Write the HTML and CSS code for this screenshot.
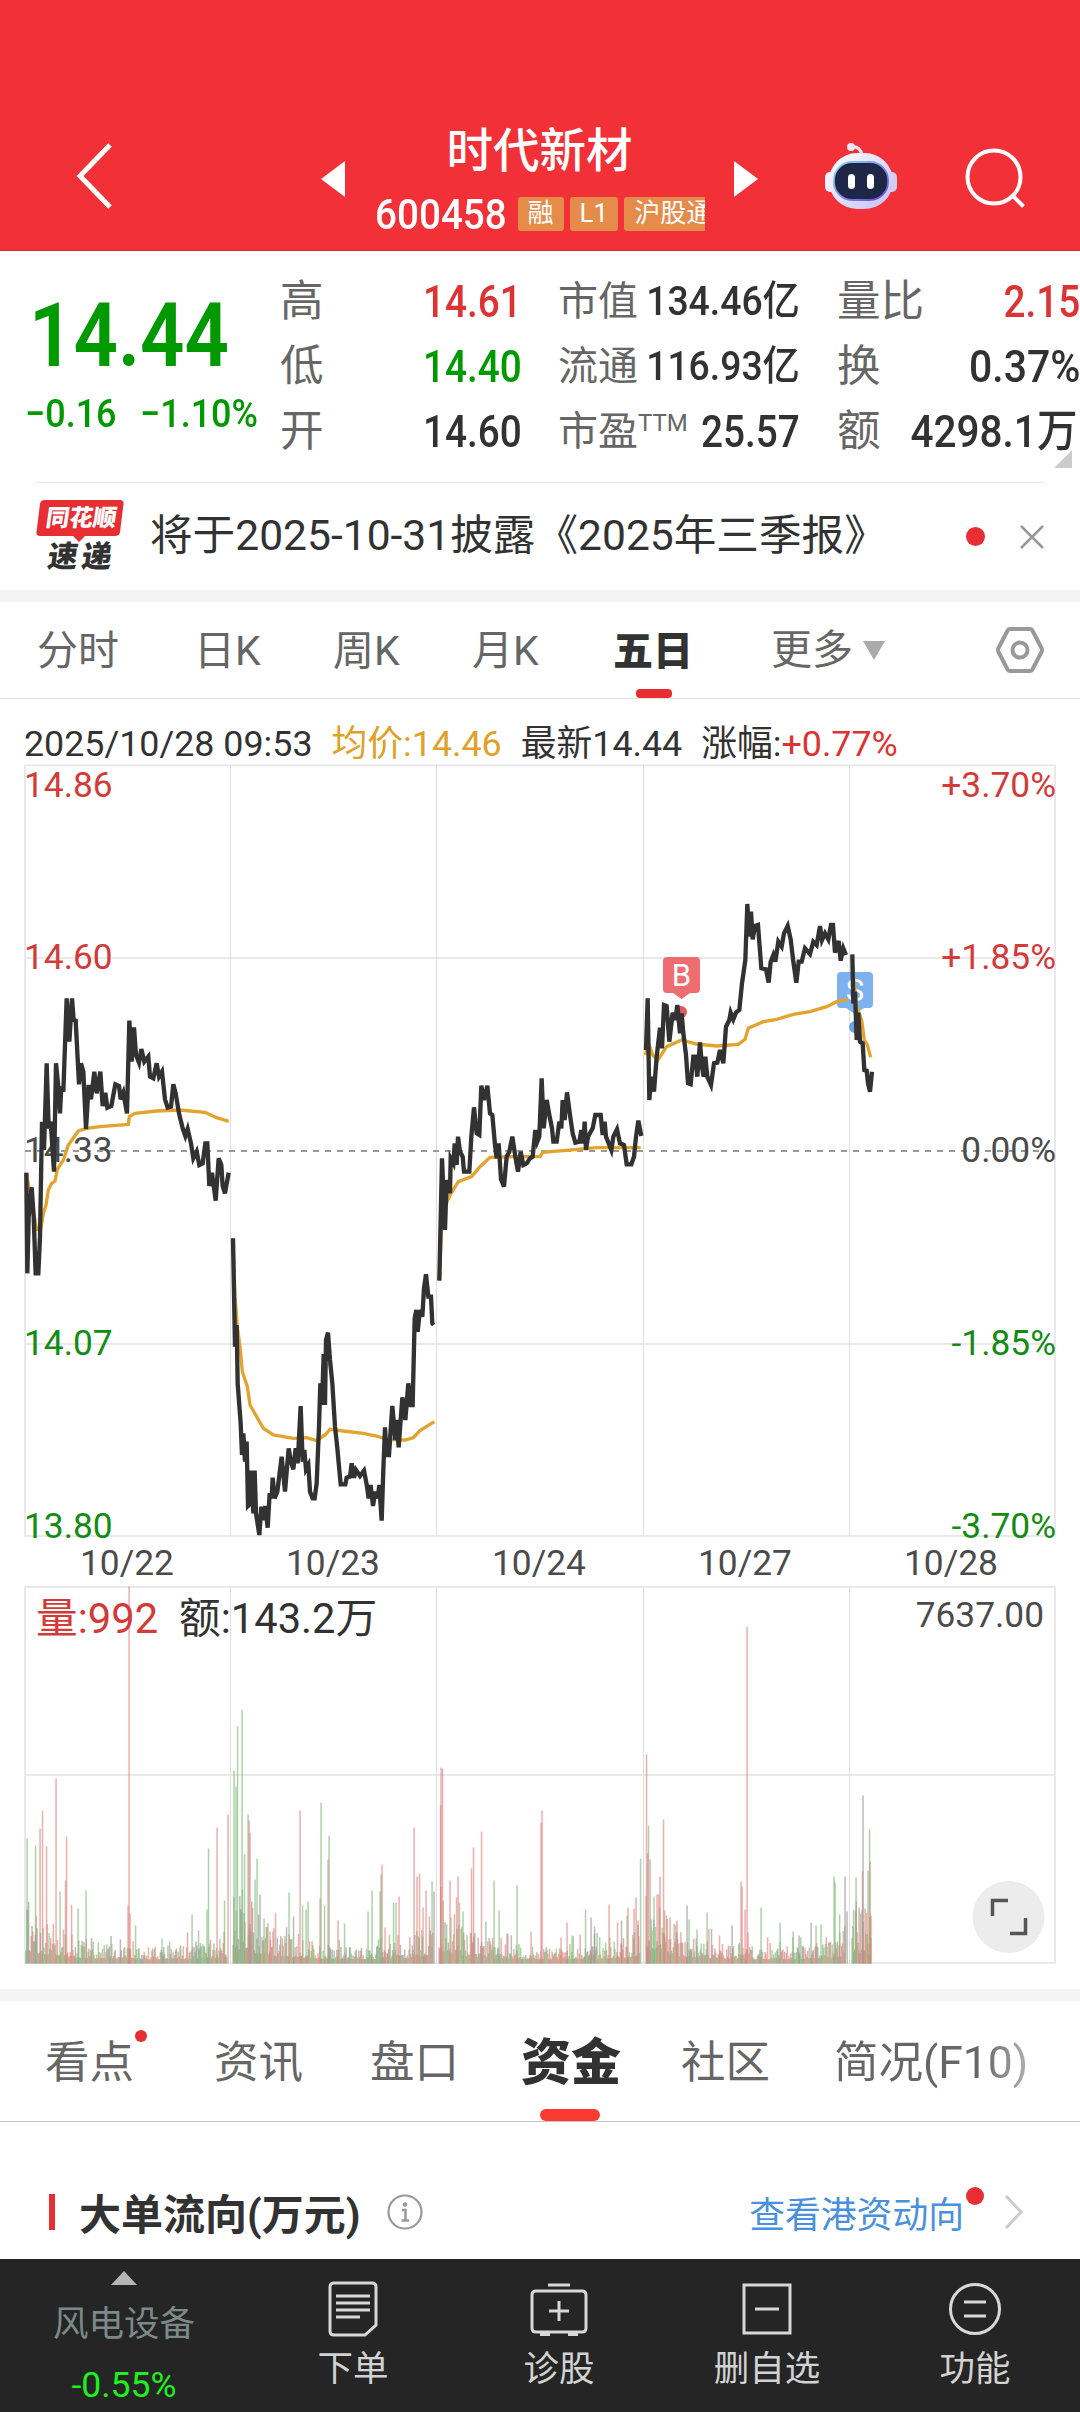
FILE: index.html
```html
<!DOCTYPE html>
<html lang="zh-CN">
<head>
    <meta charset="UTF-8">
    <meta name="viewport" content="width=device-width, initial-scale=1.0">
    <title>时代新材 600458</title>
    <link rel="stylesheet" href="styles.css">
</head>
<body>
    <header class="header">
        <svg class="back" width="40" height="70" viewBox="0 0 40 70"><path d="M36 4L6 35L36 66" fill="none" stroke="#fff" stroke-width="5"/></svg>
        <div class="stock">
            <svg width="24" height="36" viewBox="0 0 24 36"><path d="M24 0V36L0 18Z" fill="#fff"/></svg>
            <div class="stock-main">
                <div class="stock-name">时代新材</div>
                <div class="stock-sub">
                    <span class="stock-code">600458</span>
                    <span class="tag">融</span>
                    <span class="tag">L1</span>
                    <span class="tag">沪股通</span>
                </div>
            </div>
            <svg width="24" height="36" viewBox="0 0 24 36"><path d="M0 0V36L24 18Z" fill="#fff"/></svg>
        </div>
        <svg class="robot" width="74" height="70" viewBox="0 0 74 70">
            <defs>
                <linearGradient id="shell" x1="0" y1="0" x2="1" y2="1">
                    <stop offset="0" stop-color="#fff"/>
                    <stop offset="1" stop-color="#c3c0f2"/>
                </linearGradient>
                <linearGradient id="rim" x1="0" y1="0" x2="1" y2="1">
                    <stop offset="0" stop-color="#8fd8f5"/>
                    <stop offset="1" stop-color="#6a3fe0"/>
                </linearGradient>
            </defs>
            <path d="M26 5Q36 3 38 13" fill="none" stroke="#eeeafa" stroke-width="3"/>
            <circle cx="27" cy="5" r="4" fill="#eeeafa"/>
            <rect x="1" y="30" width="14" height="20" rx="5" fill="#f4f0ff"/>
            <rect x="59" y="30" width="14" height="20" rx="5" fill="#cfccf5"/>
            <rect x="5" y="11" width="64" height="56" rx="28" fill="url(#shell)"/>
            <rect x="10" y="20" width="54" height="38" rx="18" fill="#1f2747" stroke="url(#rim)" stroke-width="1.8"/>
            <rect x="24" y="32" width="7" height="15" rx="3.5" fill="#fff"/>
            <rect x="43" y="32" width="7" height="15" rx="3.5" fill="#fff"/>
        </svg>
        <svg class="search" width="62" height="62" viewBox="0 0 62 62"><g fill="none" stroke="#fff" stroke-width="4"><circle cx="29" cy="29" r="26.5"/><path d="M47.500 47.500L58.500 58.500"/></g></svg>
    </header>

    <section class="quote">
        <div class="price">
            <div class="price-now"><span class="squeeze">14.44</span></div>
            <div class="price-diff"><span class="squeeze">−0.16</span><span class="squeeze">−1.10%</span></div>
        </div>
        <div class="stats stats-a">
            <div class="stat"><span>高</span><b class="up">14.61</b></div>
            <div class="stat"><span>低</span><b class="down">14.40</b></div>
            <div class="stat"><span>开</span><b>14.60</b></div>
        </div>
        <div class="stats stats-b">
            <div class="stat"><span>市值</span><b class="small">134.46亿</b></div>
            <div class="stat"><span>流通</span><b class="small">116.93亿</b></div>
            <div class="stat"><span>市盈<i>TTM</i></span><b>25.57</b></div>
        </div>
        <div class="stats stats-c">
            <div class="stat"><span>量比</span><b class="up">2.15</b></div>
            <div class="stat"><span>换</span><b class="percent">0.37%</b></div>
            <div class="stat"><span>额</span><b class="wide">4298.1万</b></div>
        </div>
        <svg class="corner" width="18" height="18" viewBox="0 0 18 18"><path d="M18 0V18H0Z" fill="#ccc"/></svg>
    </section>

    <section class="news">
        <div class="news-logo">
            <svg width="90" height="44" viewBox="0 0 90 44">
                <path d="M9 1H84Q88 1 87.500 5L84 33Q83.500 37 79 37H49L43 43L37 37H4Q0 37 .5 33L4 5Q4.500 1 9 1Z" fill="#e72f33"/>
            </svg>
            <span class="logo-top">同花顺</span>
            <span class="logo-bottom">速递</span>
        </div>
        <div class="news-text">将于2025-10-31披露《2025年三季报》</div>
        <i class="news-dot"></i>
        <svg width="24" height="24" viewBox="0 0 24 24"><path d="M1 1L23 23M23 1L1 23" stroke="#999" stroke-width="2.500"/></svg>
    </section>

    <nav class="periods">
        <span>分时</span>
        <span>日K</span>
        <span>周K</span>
        <span>月K</span>
        <span class="active">五日</span>
        <span class="more">更多<svg width="22" height="19" viewBox="0 0 22 19"><path d="M0 0H22L11 19Z" fill="#aaa"/></svg></span>
        <svg width="48" height="46" viewBox="0 0 48 46"><g fill="none" stroke="#999" stroke-width="4"><path d="M14 2H34Q35.500 2 36.300 3.300L45.500 21Q46.500 23 45.500 25L36.300 42.700Q35.500 44 34 44H14Q12.500 44 11.700 42.700L2.500 25Q1.500 23 2.500 21L11.700 3.300Q12.500 2 14 2Z"/><circle cx="24" cy="23" r="7.500"/></g></svg>
    </nav>

    <section class="chart">
        <div class="chart-info">
            <span>2025/10/28 09:53</span>
            <span class="avg">均价:14.46</span>
            <span>最新14.44</span>
            <span>涨幅:<em>+0.77%</em></span>
        </div>
        <svg class="chart-canvas" width="1080" height="1229" viewBox="0 760 1080 1229">
            <g class="grid">
                <path d="M24 765.500H1056M24 958H1056M24 1344H1056M24 1536H1056M25 765V1536M1055 765V1536"/>
                <path d="M24 1587H1056M24 1775H1056M24 1963H1056M25 1587V1963M1055 1587V1963"/>
                <path class="thin" d="M230.500 765V1536M436.500 765V1536M643.500 765V1536M849.500 765V1536M230.500 1587V1963M436.500 1587V1963M643.500 1587V1963M849.500 1587V1963"/>
            </g>
            <path d="M25 1151H1056" stroke="#999" stroke-width="2" stroke-dasharray="6 6"/>
            <g id="volume"></g>

            <g class="axis">
                <text class="red" x="24" y="797">14.86</text>
                <text class="red" x="24" y="969">14.60</text>
                <text x="24" y="1162">14.33</text>
                <text class="green" x="24" y="1355">14.07</text>
                <text class="green" x="24" y="1538">13.80</text>
            </g>
            <g class="axis end">
                <text class="red" x="1056" y="797">+3.70%</text>
                <text class="red" x="1056" y="969">+1.85%</text>
                <text x="1056" y="1162">0.00%</text>
                <text class="green" x="1056" y="1355">-1.85%</text>
                <text class="green" x="1056" y="1538">-3.70%</text>
                <text x="1044" y="1627">7637.00</text>
            </g>
            <g class="axis middle">
                <text x="127" y="1575">10/22</text>
                <text x="333" y="1575">10/23</text>
                <text x="539" y="1575">10/24</text>
                <text x="745" y="1575">10/27</text>
                <text x="951" y="1575">10/28</text>
            </g>
            <text class="vol red" x="36" y="1633">量:992</text>
            <text class="vol" x="179" y="1633">额:143.2万</text>

            <!-- trade marks -->
            <circle cx="681" cy="1012" r="6" fill="#e2585b"/>
            <path d="M667 957H696Q700 957 700 961V989Q700 993 696 993H690L681.500 999L673 993H667Q663 993 663 989V961Q663 957 667 957Z" fill="#ee6d70"/>
            <text class="mark" x="681.500" y="986">B</text>
            <circle cx="855" cy="1027" r="6" fill="#6aa3e8"/>
            <path d="M841 972H869Q873 972 873 976V1004Q873 1008 869 1008H864L855 1014L846 1008H841Q837 1008 837 1004V976Q837 972 841 972Z" fill="#7db1f0"/>
            <text class="mark" x="855" y="1001">S</text>

            <!-- 10/22 -->
            <g transform="translate(0 750) scale(.33333)">
                <polyline class="avg-line" points="79,1268 90,1330 100,1380 110,1438 122,1438 130,1390 138,1365 145,1320 155,1300 165,1293 172,1258 190,1230 205,1185 235,1143 260,1135 300,1130 385,1123 388,1100 405,1090 470,1083 540,1080 615,1087 650,1103 686,1114"/>
                <polyline class="price-line" points="79,1268 82,1570 86,1400 95,1312 101,1400 107,1570 115,1570 120,1460 126,1115 132,1200 140,940 146,1135 152,1115 162,1265 168,940 174,1000 180,1090 184,1010 190,1025 200,745 208,875 216,745 221,810 227,812 237,1003 243,940 250,965 258,1137 266,1005 273,1048 283,965 290,1030 301,965 308,1068 316,1028 322,1073 334,1068 346,1003 357,1008 362,1048 370,1028 381,1090 388,812 395,935 402,832 408,915 417,938 424,897 433,935 445,920 450,980 460,985 470,940 477,980 486,965 495,1048 503,1073 513,1070 520,1003 527,1030 537,1090 548,1135 556,1158 563,1137 573,1180 580,1225 590,1205 598,1245 608,1240 616,1180 622,1180 628,1308 636,1268 647,1352 656,1225 664,1245 668,1308 675,1330 686,1268"/>
            </g>
            <!-- 10/23 -->
            <g transform="translate(0 1150) scale(.33333)">
                <polyline class="avg-line" points="699,265 705,440 712,530 720,590 727,665 742,710 750,765 770,800 790,835 820,855 880,865 920,863 950,872 975,855 990,838 1030,843 1090,850 1130,858 1160,868 1215,870 1240,863 1260,842 1303,815"/>
                <polyline class="price-line" points="699,265 705,590 710,525 713,700 722,820 726,915 730,850 735,935 740,875 744,1068 752,1060 754,962 760,1090 764,962 768,1090 778,1155 784,1070 792,1110 796,1068 803,1133 809,1030 815,1045 818,983 824,1045 832,1025 845,920 855,1025 866,895 873,935 880,958 887,895 893,940 902,768 908,935 913,900 918,958 925,945 930,1025 938,1045 944,1045 950,1000 957,830 961,700 966,765 971,612 975,765 978,570 984,548 990,630 997,700 1005,830 1012,895 1018,960 1022,1003 1036,1003 1040,983 1050,980 1055,940 1062,983 1068,960 1080,978 1092,962 1100,1003 1106,1045 1112,1005 1119,1068 1126,1025 1133,1045 1138,1005 1145,1112 1150,960 1155,832 1160,915 1167,915 1177,768 1186,870 1190,810 1196,892 1207,742 1216,810 1225,700 1232,765 1238,765 1244,505 1249,480 1253,545 1260,480 1267,500 1272,415 1278,373 1285,440 1293,440 1297,520 1301,525"/>
            </g>
            <!-- 10/24, 10/27, 10/28 -->
            <g transform="translate(430 900) scale(.33333)">
                <polyline class="avg-line" points="28,1142 35,980 45,920 60,885 85,845 125,830 150,800 180,772 250,770 330,770 338,757 400,752 500,743 632,743"/>
                <polyline class="price-line" points="28,1142 36,775 45,990 50,840 60,880 62,775 70,790 74,730 80,795 84,710 90,755 98,770 102,815 118,815 124,710 132,622 140,700 148,705 154,557 162,600 172,557 180,640 187,645 195,735 200,775 206,730 213,838 222,860 230,770 238,755 247,710 256,770 264,815 272,755 280,795 290,790 300,775 308,770 316,690 322,725 328,710 335,535 341,685 350,600 358,645 366,685 370,725 380,725 388,665 394,685 398,600 404,660 411,577 420,645 428,700 436,728 448,725 454,690 460,730 464,665 468,750 474,710 488,685 496,645 512,645 518,705 524,665 528,710 544,750 550,710 561,688 570,730 582,735 590,793 604,793 612,770 618,710 625,662 634,708"/>
                <polyline class="avg-line" points="646,465 656,430 668,465 684,480 710,440 755,420 800,432 860,438 925,433 945,418 955,385 1000,365 1040,358 1090,343 1140,335 1190,320 1220,305 1252,298"/>
                <polyline class="price-line" points="648,450 653,295 658,600 664,530 672,575 680,470 690,383 696,445 702,315 710,318 718,425 728,338 736,360 742,315 750,400 755,340 760,400 768,465 774,550 782,553 790,470 796,470 802,530 810,427 816,500 821,530 826,470 832,530 843,555 852,490 862,488 870,450 880,490 888,380 898,360 902,338 910,358 918,338 928,330 936,250 946,180 952,12 958,110 963,35 968,118 975,78 984,75 994,205 1008,208 1016,248 1022,185 1030,165 1036,185 1045,125 1055,140 1062,100 1073,78 1082,118 1090,185 1099,248 1106,185 1115,185 1125,145 1140,162 1150,125 1160,135 1170,78 1176,120 1185,100 1195,118 1203,75 1209,75 1215,158 1226,123 1232,182 1240,145 1248,165"/>
                <polyline class="avg-line" points="1267,200 1280,320 1295,360 1303,420 1312,435 1322,472"/>
                <polyline class="price-line" points="1267,163 1270,310 1275,275 1280,420 1285,338 1290,425 1298,430 1303,510 1310,512 1314,550 1320,575 1326,515"/>
            </g>

            <!-- full screen button -->
            <circle cx="1008.500" cy="1917" r="36" fill="#ececec"/>
            <path d="M992.500 1916V1900.500H1008M1010 1933.500H1025.500V1918" fill="none" stroke="#555" stroke-width="3.500"/>
        </svg>
    </section>

    <nav class="tabs">
        <span class="dot">看点</span>
        <span>资讯</span>
        <span>盘口</span>
        <span class="active">资金</span>
        <span>社区</span>
        <span class="fade">简况(F10)</span>
    </nav>

    <section class="flow">
        <h2>大单流向(万元)</h2>
        <svg width="36" height="36" viewBox="0 0 36 36"><circle cx="18" cy="18" r="16.500" fill="none" stroke="#999" stroke-width="2.200"/><circle cx="18" cy="10.500" r="2.300" fill="#999"/><path d="M15 16H18.500V26M14.500 26.500H22" fill="none" stroke="#999" stroke-width="2.500"/></svg>
        <a class="flow-link">查看港资动向</a>
        <svg width="20" height="34" viewBox="0 0 20 34"><path d="M2 1L17 17L2 33" fill="none" stroke="#ccc" stroke-width="3"/></svg>
    </section>

    <footer class="bottom">
        <div class="sector">
            <svg width="26" height="14" viewBox="0 0 26 14"><path d="M13 0L26 14H0Z" fill="#b5b5b5"/></svg>
            <span>风电设备</span>
            <b>-0.55%</b>
        </div>
        <div class="action">
            <svg width="50" height="56" viewBox="0 0 50 56"><path d="M6 2H44Q48 2 48 6V44L37 54H6Q2 54 2 50V6Q2 2 6 2ZM8 15H42M8 22H42M8 29H42M8 36H32"/></svg>
            <span>下单</span>
        </div>
        <div class="action">
            <svg width="58" height="56" viewBox="0 0 58 56"><path d="M18 4H40M6 10H52Q56 10 56 14V47Q56 51 52 51H6Q2 51 2 47V14Q2 10 6 10ZM29 20V40M19 30H39M10 53.500H20M38 53.500H48"/></svg>
            <span>诊股</span>
        </div>
        <div class="action">
            <svg width="50" height="56" viewBox="0 0 50 56"><path d="M2 4H48V52H2ZM13 28H37"/></svg>
            <span>删自选</span>
        </div>
        <div class="action">
            <svg width="54" height="56" viewBox="0 0 54 56"><circle cx="27" cy="28" r="24.500"/><path d="M16 21H38M16 35H38"/></svg>
            <span>功能</span>
        </div>
    </footer>

    <script src="volume.js"></script>
</body>
</html>
```

FILE: styles.css
```css
* {
    box-sizing: border-box;
}

body {
    margin: 0;
    width: 1080px;
    height: 2412px;
    overflow: hidden;
    background-color: #fff;
    color: #323232;
    font-family: Roboto, "Noto Sans CJK SC", sans-serif;
}

svg {
    display: block;
    flex: none;
}

i, em {
    font-style: normal;
}

/* Header */
.header {
    display: flex;
    height: 251px;
    padding: 118px 0 0 74px;
    background-color: #f23037;
    border-bottom: 1px solid #c4343b;
    color: #fff;
}

.back {
    margin: 23px 207px 0 0;
}

.stock {
    display: flex;
    align-items: center;
    justify-content: space-between;
    width: 437px;
    height: 122px;
}

.stock-main {
    width: 330px;
}

.stock-name {
    height: 66px;
    line-height: 66px;
    text-align: center;
    font-size: 46.5px;
    font-weight: 500;
}

.stock-sub {
    display: flex;
    align-items: center;
    gap: 6px;
    height: 56px;
    padding-top: 4px;
    overflow: hidden;
}

.stock-code {
    flex: none;
    width: 137px;
    font-size: 42px;
    font-weight: 500;
    transform: scaleX(0.92);
    transform-origin: left;
}

.tag {
    flex: none;
    height: 34px;
    padding: 0 10px;
    border-radius: 3px;
    background-color: #e58c4a;
    line-height: 33px;
    font-size: 26px;
}

.robot {
    margin: 24px 0 0 66px;
}

.search {
    margin: 30px 0 0 67px;
}

/* Quote */
.quote {
    position: relative;
    display: flex;
    height: 231px;
    padding-top: 18px;
    white-space: nowrap;
}

.price {
    width: 280px;
    padding: 15px 0 0 25px;
    color: #009900;
    font-weight: 500;
}

.price-now {
    height: 104px;
    padding-left: 4px;
    line-height: 104px;
    font-size: 89.5px;
    font-weight: 600;
}

.price-diff {
    display: flex;
    height: 52px;
    line-height: 52px;
    font-size: 39.5px;
}

.price-diff .squeeze {
    width: 115px;
    transform: scaleX(0.91);
}

.squeeze {
    display: inline-block;
    transform: scaleX(0.87);
    transform-origin: left;
}

.stat {
    display: flex;
    justify-content: space-between;
    height: 65px;
    line-height: 65px;
    color: #666;
    font-size: 43.5px;
}

.stat b {
    color: #323232;
    font-size: 45px;
    font-weight: 500;
    transform: scaleX(0.86);
    transform-origin: right;
}

.stat b.small {
    margin-left: -40px;
    font-size: 41px;
    transform: scaleX(0.91);
}

.stat b.percent {
    transform: scaleX(0.91);
}

.stat b.wide {
    margin-right: 3px;
    transform: scaleX(0.9);
}

.stat i {
    font-size: 24px;
    vertical-align: 14px;
    line-height: 1;
}

.stat .up {
    color: #dd3333;
}

.stat .down {
    color: #009900;
}

.stats-a {
    width: 242px;
}

.stats-b {
    width: 242px;
    margin-left: 36px;
}

.stats-b .stat {
    font-size: 40px;
}

.stats-b .stat span {
    width: 100px;
}

.stats-c {
    width: 243px;
    margin-left: 37px;
}

.corner {
    position: absolute;
    right: 8px;
    bottom: 14px;
}

/* News */
.news {
    display: flex;
    align-items: center;
    height: 108px;
    margin: 0 36px;
    border-top: 1px solid #e8e8e8;
}

.news-logo {
    position: relative;
    width: 90px;
    height: 76px;
    margin-right: 24px;
}

.logo-top,
.logo-bottom {
    position: absolute;
    font-weight: 900;
    transform: skewX(-8deg);
    white-space: nowrap;
}

.logo-top {
    left: 10px;
    top: 3px;
    color: #fff;
    font-size: 23.5px;
    line-height: 32px;
}

.logo-bottom {
    left: 12px;
    top: 42px;
    font-size: 30px;
    line-height: 32px;
    letter-spacing: 4px;
}

.news-text {
    flex: 1;
    font-size: 42.6px;
    line-height: 60px;
    padding-bottom: 3px;
    white-space: nowrap;
}

.news-dot {
    width: 19px;
    height: 19px;
    margin-right: 35px;
    border-radius: 50%;
    background-color: #e72f33;
}

/* Period tabs */
.periods {
    display: grid;
    grid-template-columns: 157px 139px 139px 141px 158px 225px 48px;
    align-items: center;
    height: 109px;
    padding-left: 37px;
    border-top: 12px solid #f4f4f4;
    border-bottom: 1px solid #e2e2e2;
    color: #666;
    font-size: 41px;
}

.periods span {
    height: 96px;
    line-height: 99px;
}

.periods .active {
    position: relative;
    color: #323232;
    font-size: 40px;
    font-weight: 900;
}

.periods .active::after {
    content: "";
    position: absolute;
    left: 23px;
    bottom: 0;
    width: 36px;
    height: 9px;
    border-radius: 4px;
    background-color: #e72f33;
}

.periods .more {
    display: flex;
    align-items: center;
    gap: 10px;
}

/* Chart */
.chart {
    height: 1290px;
}

.chart-info {
    display: flex;
    height: 61px;
    padding: 11px 0 0 24px;
    font-size: 35.8px;
    line-height: 68px;
    white-space: nowrap;
    gap: 19px;
}

.chart-info .avg {
    color: #dfa126;
}

.chart-info em {
    color: #dd3333;
}

.grid path {
    fill: none;
    stroke: #e9e9e9;
    stroke-width: 2;
}

.grid .thin {
    stroke: #dedede;
    stroke-width: 1;
}

.chart-canvas text {
    font-family: Roboto, "Noto Sans CJK SC", sans-serif;
}

.axis text {
    fill: #4b4b4b;
    font-size: 35.3px;
}

.end text {
    text-anchor: end;
}

.middle text {
    text-anchor: middle;
}

.vol {
    fill: #323232;
    font-size: 41.7px;
}

.axis .red,
.vol.red {
    fill: #d33a3a;
}

.axis .green {
    fill: #128c12;
}

.mark {
    fill: #fff;
    font-size: 31px;
    text-anchor: middle;
}

.price-line {
    fill: none;
    stroke: #323232;
    stroke-width: 13;
}

.avg-line {
    fill: none;
    stroke: #e2a42f;
    stroke-width: 10;
}

/* Info tabs */
.tabs {
    display: grid;
    grid-template-columns: 169px 156px 151px 160px 153px 245px;
    height: 133px;
    padding-left: 45px;
    border-top: 12px solid #f4f4f4;
    border-bottom: 1px solid #c4c4c4;
    color: #666;
    font-size: 44.5px;
    line-height: 124px;
    white-space: nowrap;
}

.tabs span {
    position: relative;
    height: 120px;
}

.tabs .active {
    color: #323232;
    font-size: 50px;
    font-weight: 900;
}

.tabs .active::after {
    content: "";
    position: absolute;
    left: 19px;
    bottom: 0;
    width: 60px;
    height: 12px;
    border-radius: 6px;
    background-color: #fb3a30;
}

.tabs .dot::after {
    content: "";
    position: absolute;
    left: 90px;
    top: 29px;
    width: 12px;
    height: 12px;
    border-radius: 50%;
    background-color: #e72f33;
}

.tabs .fade {
    background-image: linear-gradient(90deg, #666 60%, #bbb 82%);
    background-clip: text;
    color: transparent;
}

/* Fund flow */
.flow {
    display: flex;
    align-items: center;
    height: 137px;
    padding: 42px 56px 0 49px;
}

.flow h2 {
    display: flex;
    align-items: center;
    margin: 0 27px 0 0;
    font-size: 42px;
    font-weight: 700;
}

.flow h2::before {
    content: "";
    width: 6px;
    height: 36px;
    margin-right: 24px;
    background-color: #e72f33;
}

.flow-link {
    position: relative;
    margin: 0 40px 0 auto;
    color: #4a90dc;
    font-size: 35.8px;
}

.flow-link::after {
    content: "";
    position: absolute;
    right: -20px;
    top: 1px;
    width: 18px;
    height: 18px;
    border-radius: 50%;
    background-color: #e72f33;
}

/* Bottom bar */
.bottom {
    display: grid;
    grid-template-columns: 250px 206px 206px 210px 206px;
    height: 153px;
    background-color: #252525;
    color: #d2d2d2;
    font-size: 35.5px;
}

.sector,
.action {
    display: flex;
    flex-direction: column;
    align-items: center;
}

.sector {
    padding: 12px 2px 0 0;
    color: #7b8a88;
}

.sector span {
    height: 76px;
    line-height: 78px;
}

.sector b {
    color: #1ff01f;
    font-weight: 400;
    line-height: 48px;
}

.action {
    padding-top: 22px;
}

.action svg {
    fill: none;
    stroke: #d8d8d8;
    stroke-width: 3;
}

.action span {
    line-height: 65px;
}
```

FILE: volume.js
```js
// [x, height, colour] of the tall bars, r = up, g = down, n = flat
const spikes = [
    [27, 125, "g"], [35.5, 118, "g"], [40, 135, "r"], [42.5, 153, "r"], [46.5, 117, "r"], [56, 185, "r"],
    [60, 72, "g"], [65.5, 83, "r"], [66.5, 127, "r"], [71.5, 59, "r"], [78, 55, "g"], [86, 73, "g"],
    [128, 58, "r"], [129, 377, "r"], [130, 50, "r"], [135.5, 38, "g"], [162, 25, "g"], [192, 49, "g"],
    [198.5, 33, "g"], [207, 54, "g"], [208.5, 115, "g"], [217, 136, "r"], [224.5, 63, "g"], [228, 149, "r"],
    [234, 193, "g"], [236, 177, "g"], [237.5, 237, "g"], [242, 254, "g"], [244.5, 109, "g"], [248, 149, "g"],
    [249, 143, "r"], [250, 131, "r"], [255, 84, "g"], [257, 105, "g"], [260, 69, "n"], [264, 45, "g"],
    [270, 32, "r"], [289, 71, "g"], [293.5, 47, "n"], [300, 153, "r"], [302.5, 58, "g"], [306, 54, "g"],
    [308, 62, "g"], [320, 65, "r"], [321, 161, "g"], [324.5, 58, "g"], [328, 104, "r"], [329, 128, "g"],
    [338, 43, "r"], [344.5, 40, "g"], [368, 52, "g"], [372, 73, "g"], [380, 72, "g"], [381, 89, "g"],
    [382, 99, "r"], [385, 36, "r"], [393.5, 61, "g"], [396, 61, "g"], [399, 67, "r"], [414, 136, "r"],
    [417, 87, "r"], [419.5, 90, "r"], [423, 56, "r"], [426, 73, "r"], [432, 82, "g"], [434, 72, "n"],
    [440.5, 158, "r"], [441, 196, "r"], [442.5, 195, "r"], [450, 83, "r"], [456.5, 66, "r"], [458, 87, "r"],
    [463, 52, "g"], [471.5, 95, "r"], [473.5, 116, "r"], [481.5, 132, "r"], [494, 83, "g"], [499, 53, "g"],
    [517, 78, "g"], [531, 32, "r"], [541, 141, "r"], [542, 153, "r"], [561, 26, "r"], [567, 41, "r"],
    [572, 28, "g"], [585.5, 54, "g"], [591, 46, "n"], [594.5, 37, "n"], [609, 59, "r"], [617.5, 41, "r"],
    [621.5, 43, "n"], [627, 48, "g"], [628, 56, "r"], [634, 55, "r"], [636, 66, "r"], [638, 43, "r"],
    [640.5, 105, "g"], [646.5, 209, "r"], [647.5, 110, "r"], [648.5, 138, "g"], [650, 104, "r"], [654, 67, "g"],
    [657, 69, "r"], [660, 87, "r"], [663.5, 144, "r"], [664.5, 53, "r"], [670, 46, "r"], [677, 43, "r"],
    [687, 58, "n"], [689, 44, "g"], [697, 34, "g"], [707, 51, "g"], [719.5, 28, "r"], [732, 38, "n"],
    [741, 82, "r"], [742, 77, "r"], [745, 54, "r"], [747, 337, "r"], [761, 56, "g"], [780, 41, "g"],
    [793, 26, "g"], [799, 28, "n"], [811, 41, "n"], [816, 38, "g"], [821, 39, "g"], [834, 87, "g"],
    [835, 81, "g"], [839.5, 49, "g"], [845, 87, "n"], [847, 52, "n"], [853.5, 54, "g"], [856, 86, "g"],
    [859, 56, "r"], [862.5, 92, "r"], [863, 168, "n"], [865, 55, "r"], [868, 93, "g"], [869.5, 134, "g"],
    [870, 102, "r"], [871, 48, "r"]
];
// [first x, last x, size at the open, size at the close]
const days = [[26, 227, 62, 20], [233, 433, 85, 34], [439, 640, 56, 26], [646, 845, 62, 25], [852, 871, 55, 0]];
const colours = { r: "#e27f7d", g: "#7cb873", n: "#8f8f8f" };
const base = 1963.5;

let seed = 17;
function rand() {
    seed = (seed * 16807) % 2147483647;
    return seed / 2147483647;
}

function bar(x, h, c) {
    return `<rect x="${x - 0.7}" y="${base - h}" width="1.5" height="${h}" fill="${colours[c]}" opacity="0.62"/>`;
}

let bars = "";
days.forEach(([from, to, open, close]) => {
    for (let x = from; x <= to; x += 0.85) {
        const t = x - from;
        const size = 12 + open * Math.exp(-t / 32) + close * Math.exp((x - to) / 24);
        const r = rand();
        const h = 2 + size * (0.15 + 0.9 * r * r) + (rand() > 0.9 ? 22 * rand() : 0);
        const k = rand();
        bars += bar(x, h, k < 0.42 ? "r" : k < 0.8 ? "g" : "n");
    }
});
spikes.forEach(([x, h, c]) => {
    bars += bar(x, h, c);
});
document.querySelector("#volume").innerHTML = bars;
```
